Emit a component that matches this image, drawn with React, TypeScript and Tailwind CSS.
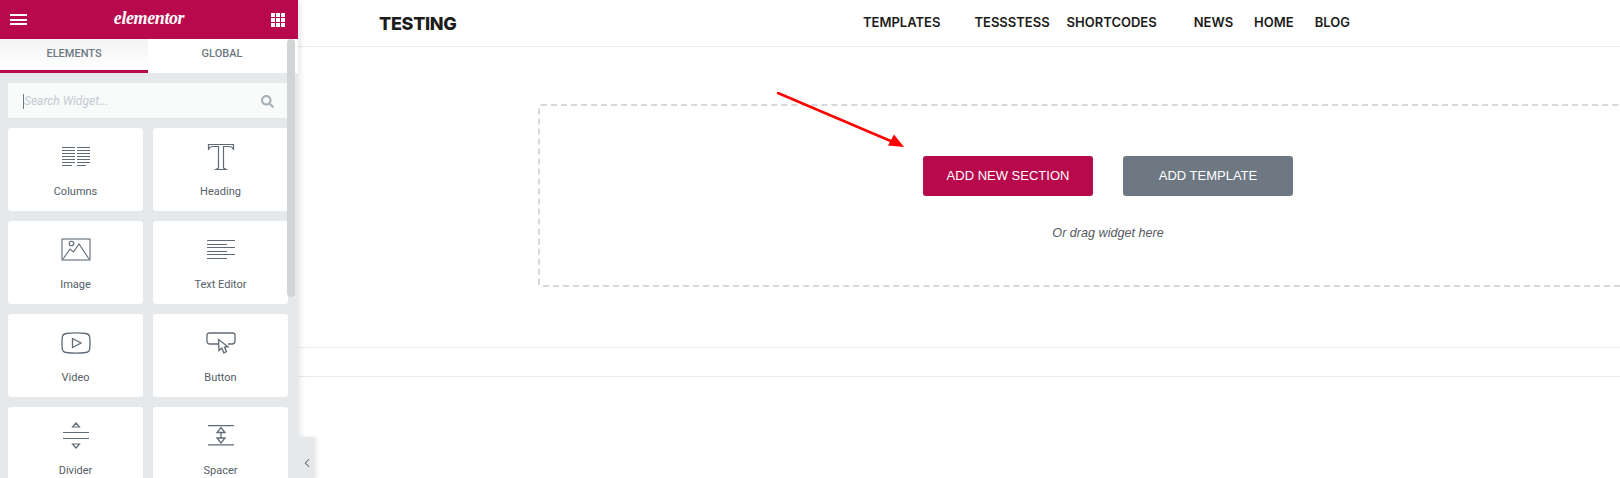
import React from 'react';
import { ChevronLeft } from 'lucide-react';
import { FaSearch } from 'react-icons/fa';

const stroke = '#5f6b76';

const ColumnsIcon = () => (
  <svg width="30" height="20" viewBox="0 0 30 20" fill="none" stroke={stroke} strokeWidth="1">
    {[0.5, 3.5, 6.5, 9.5, 12.5, 15.5, 18.5].map((y, i) => (
      <g key={y}>
        <path d={`M1 ${y}H${i === 6 ? 11 : 14}`} />
        <path d={`M16 ${y}H${i === 6 ? 25 : 29}`} />
      </g>
    ))}
  </svg>
);

const HeadingIcon = () => (
  <svg width="28" height="28" viewBox="0 0 28 28" fill="none" stroke={stroke} strokeWidth="1.200">
    <path d="M1.500 7V1.500H26.500V7M1.500 7C2 4.500 3 3.500 6 3.500H11.500V25L9 26.500H19L16.500 25V3.500H22C25 3.500 26 4.500 26.500 7" />
  </svg>
);

const ImageIcon = () => (
  <svg width="30" height="23" viewBox="0 0 30 23" fill="none" stroke={stroke} strokeWidth="1.100">
    <rect x="1" y="1" width="28" height="21" />
    <circle cx="10.500" cy="5.500" r="2.300" />
    <path d="M2 21L9 11L12.500 14L18 6L28 21" />
  </svg>
);

const TextIcon = () => (
  <svg width="30" height="20" viewBox="0 0 30 20" fill="none" stroke={stroke} strokeWidth="1">
    {[0.5, 4.5, 7.5, 11.5, 14.5, 18.5].map((y, i) => (
      <path key={y} d={`M1 ${y}H${i % 2 === 0 ? 29 : 21}`} />
    ))}
  </svg>
);

const VideoIcon = () => (
  <svg width="30" height="22" viewBox="0 0 30 22" fill="none" stroke={stroke} strokeWidth="1.300">
    <path d="M5 1.500C11 0.800 19 0.800 25 1.500C27.500 1.800 28.500 3 28.700 5C29.100 9 29.100 13 28.700 17C28.500 19 27.500 20.200 25 20.500C19 21.200 11 21.200 5 20.500C2.500 20.200 1.500 19 1.300 17C0.900 13 0.900 9 1.300 5C1.500 3 2.500 1.800 5 1.500Z" />
    <path d="M11.500 6.500L20 11L11.500 15.500Z" />
  </svg>
);

const ButtonIcon = () => (
  <svg width="30" height="22" viewBox="0 0 30 22" fill="none" stroke={stroke} strokeWidth="1.300">
    <path d="M12 12H4C2 12 1 11 1 9V3C1 1.800 2 1 3.500 1H26.500C28 1 29 1.800 29 3V9C29 11 28 12 26 12H22" />
    <path d="M12.500 7.500L13 18.500L15.800 16L17.800 20.800L20.500 19.700L18.500 15L22 14.700Z" fill="#fff" />
  </svg>
);

const DividerIcon = () => (
  <svg width="28" height="27" viewBox="0 0 28 27" fill="none" stroke={stroke} strokeWidth="1.200">
    <path d="M14 1L17.500 5H10.500Z" />
    <path d="M1 10.500H27M1 16.500H27" />
    <path d="M14 26L10.500 22H17.500Z" />
  </svg>
);

const SpacerIcon = () => (
  <svg width="28" height="21" viewBox="0 0 28 21" fill="none" stroke={stroke} strokeWidth="1.300">
    <path d="M1 0.600H27M1 19.900H27" />
    <path d="M14 2.500L18 7.500H10L14 2.500Z" />
    <path d="M14 18L10 13H18L14 18Z" />
    <path d="M14 7.500V13" />
  </svg>
);

const GridIcon = () => (
  <svg width="14" height="14" viewBox="0 0 14 14" fill="#fff">
    {[0, 5, 10].map(y =>
      [0, 5, 10].map(x => <rect key={`${x}-${y}`} x={x} y={y} width="4" height="4" />),
    )}
  </svg>
);

const WIDGETS = [
  { label: 'Columns', icon: <ColumnsIcon /> },
  { label: 'Heading', icon: <HeadingIcon /> },
  { label: 'Image', icon: <ImageIcon /> },
  { label: 'Text Editor', icon: <TextIcon /> },
  { label: 'Video', icon: <VideoIcon /> },
  { label: 'Button', icon: <ButtonIcon /> },
  { label: 'Divider', icon: <DividerIcon /> },
  { label: 'Spacer', icon: <SpacerIcon /> },
];

const WidgetCard = ({ label, icon }: { label: string; icon: React.ReactNode }) => (
  <div className="h-[83px] rounded-[3px] bg-white flex flex-col items-center">
    <div className="h-[57px] flex items-center justify-center">{icon}</div>
    <span className="text-[11px] leading-[14px] text-[#556068] font-['Roboto',sans-serif]">{label}</span>
  </div>
);

const Sidebar = () => (
  <aside className="relative z-10 w-[298px] h-[478px] shrink-0 bg-[#e6e9ec] shadow-[2px_0_6px_rgba(0,0,0,0.1)] font-['Roboto',sans-serif]">
    <header className="h-[39px] bg-[#b7094c] flex items-center justify-between pl-[10px] pr-[13px] text-white">
      <div className="w-[17px] flex flex-col gap-[2.5px]">
        <div className="h-[2px] bg-white" />
        <div className="h-[2px] bg-white" />
        <div className="h-[2px] bg-white" />
      </div>
      <span className="font-['Liberation_Serif',serif] italic font-bold text-[18px] leading-none tracking-[-0.4px] pb-1">elementor</span>
      <GridIcon />
    </header>
    <div className="flex h-[34px] text-[11px] font-medium uppercase text-[#6d7882] bg-white">
      <div className="w-[148px] flex items-center justify-center border-b-[3px] border-[#b7094c] bg-gradient-to-b from-[#f3f4f5] to-white">Elements</div>
      <div className="flex-1 flex items-center justify-center pb-[3px] pr-[2px]">Global</div>
    </div>
    <div className="px-2 pt-[10px]">
      <div className="h-[35px] w-[280px] bg-[#f9fafa] flex items-center justify-between pl-[15px] pr-[14px] mb-[10px]">
        <span className="mt-[1px] border-l border-[#6d7882] text-[12px] leading-[15px] italic text-[#c2cbd2]">Search Widget...</span>
        <FaSearch size={13} className="mt-[1px] text-[#a4afb7]" />
      </div>
      <div className="grid grid-cols-[135px_135px] gap-[10px]">
        {WIDGETS.map(w => (
          <WidgetCard key={w.label} label={w.label} icon={w.icon} />
        ))}
      </div>
    </div>
    {/* scrollbar */}
    <div className="absolute left-[287px] top-[39px] w-[8px] h-[258px] rounded-[4px] bg-[#d2d4d6]" />
    {/* collapse tab */}
    <div className="absolute left-[298px] top-[437px] w-[17px] h-[41px] bg-[#e6e9ec] shadow-[2px_0_4px_rgba(0,0,0,0.08)] flex items-center justify-center">
      <ChevronLeft size={14} strokeWidth={1.8} className="text-[#556068] mt-[10px]" />
    </div>
  </aside>
);

const NAV = [
  { label: 'TEMPLATES', ml: 'ml-0' },
  { label: 'TESSSTESS', ml: 'ml-[34px]' },
  { label: 'SHORTCODES', ml: 'ml-[17px]' },
  { label: 'NEWS', ml: 'ml-[37px]' },
  { label: 'HOME', ml: 'ml-[21px]' },
  { label: 'BLOG', ml: 'ml-[21px]' },
];

const Arrow = () => (
  <svg className="absolute left-[479px] top-[92px]" width="128" height="56" viewBox="0 0 128 56">
    <path d="M1 1L116 50" stroke="#ff0000" strokeWidth="2.600" strokeLinecap="round" />
    <path d="M127 55L111 53.500L117 42.500Z" fill="#ff0000" />
  </svg>
);

export default function App() {
  return (
    <div className="flex w-[1620px] h-[478px] overflow-hidden bg-white">
      <Sidebar />
      <main className="relative flex-1 min-w-0 overflow-hidden">
        <nav className="h-[47px] border-b border-[#eaeaea] flex items-center pl-[81px] font-['Inter',sans-serif] text-[#1c1c1c]">
          <span className="w-[484px] text-[18px] font-extrabold tracking-[-0.3px]">TESTING</span>
          {NAV.map(n => (
            <span key={n.label} className={`${n.ml} text-[13px] font-semibold`}>{n.label}</span>
          ))}
        </nav>
        <section className="pt-[57px] pl-[240px]">
          <div className="w-[1140px] h-[183px] border-2 border-dashed border-[#d5d8dc] rounded-[3px] pt-[50px] flex flex-col items-center">
            <div className="flex gap-[30px]">
              <button className="w-[170px] h-[40px] rounded-[3px] bg-[#b7094c] text-white text-[13px] font-['Liberation_Sans',sans-serif]">ADD NEW SECTION</button>
              <button className="w-[170px] h-[40px] rounded-[3px] bg-[#6d7882] text-white text-[13px] font-['Liberation_Sans',sans-serif]">ADD TEMPLATE</button>
            </div>
            <p className="mt-[28px] text-[12.6px] leading-[18px] italic text-[#54595f] font-['Liberation_Sans',sans-serif]">Or drag widget here</p>
          </div>
        </section>
        <div className="mt-[60px] h-[30px] border-y border-[#ebebeb]" />
        <Arrow />
      </main>
    </div>
  );
}
